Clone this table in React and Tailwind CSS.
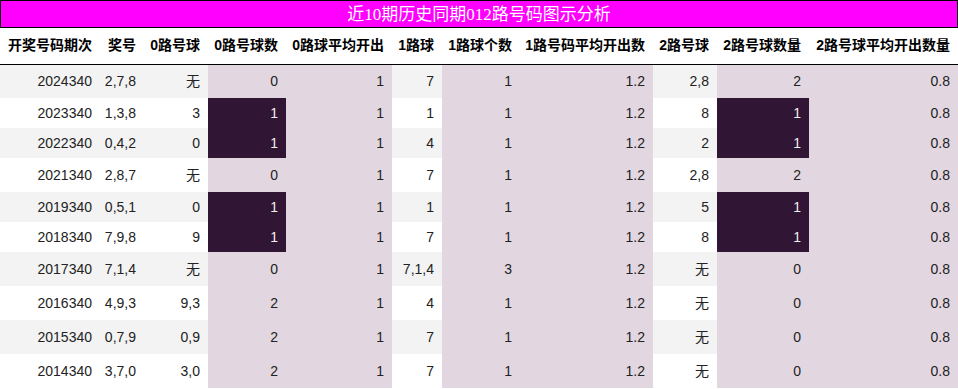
const headers = [
  '开奖号码期次', '奖号', '0路号球', '0路号球数', '0路球平均开出', '1路球',
  '1路球个数', '1路号码平均开出数', '2路号球', '2路号球数量', '2路号球平均开出数量',
];

const widths = ['w-[100px]', 'w-[44px]', 'w-[64px]', 'w-[78px]', 'w-[106px]', 'w-[50px]', 'w-[78px]', 'w-[133px]', 'w-[64px]', 'w-[92px]', 'w-[149px]'];

// columns drawn on the lilac background
const tinted = [3, 4, 6, 7, 9, 10];

const rows = [
  ['2024340', '2,7,8', '无', '0', '1', '7', '1', '1.2', '2,8', '2', '0.8'],
  ['2023340', '1,3,8', '3', '1', '1', '1', '1', '1.2', '8', '1', '0.8'],
  ['2022340', '0,4,2', '0', '1', '1', '4', '1', '1.2', '2', '1', '0.8'],
  ['2021340', '2,8,7', '无', '0', '1', '7', '1', '1.2', '2,8', '2', '0.8'],
  ['2019340', '0,5,1', '0', '1', '1', '1', '1', '1.2', '5', '1', '0.8'],
  ['2018340', '7,9,8', '9', '1', '1', '7', '1', '1.2', '8', '1', '0.8'],
  ['2017340', '7,1,4', '无', '0', '1', '7,1,4', '3', '1.2', '无', '0', '0.8'],
  ['2016340', '4,9,3', '9,3', '2', '1', '4', '1', '1.2', '无', '0', '0.8'],
  ['2015340', '0,7,9', '0,9', '2', '1', '7', '1', '1.2', '无', '0', '0.8'],
  ['2014340', '3,7,0', '3,0', '2', '1', '7', '1', '1.2', '无', '0', '0.8'],
];

const cellBg = (row, ci, ri) => {
  if ((ci === 3 || ci === 9) && row[ci] === '1') return 'bg-[#301535] text-[#f0eef0]';
  if (tinted.includes(ci)) return 'bg-[#e2d7e1]';
  return ri % 2 === 0 ? 'bg-[#f3f3f3]' : 'bg-white';
};

export default function App() {
  return (
    <div className="w-[958px] h-[389px] bg-white text-[#222] font-['Liberation_Sans','Noto_Sans_CJK_SC',sans-serif] text-[14px]">
      <div className="h-[28px] border border-black bg-[#ff00ff] flex items-center justify-center text-white text-[17px] font-['Liberation_Serif','Noto_Sans_CJK_SC',serif] leading-none">
        近10期历史同期012路号码图示分析
      </div>
      <table className="table-fixed border-collapse w-[958px]">
        <colgroup>
          {widths.map((w, i) => (
            <col key={i} className={w} />
          ))}
        </colgroup>
        <thead>
          <tr className="h-[36px] border-b border-black">
            {headers.map((h) => (
              <th key={h} className="text-right font-bold pr-2 pl-0 whitespace-nowrap text-black">
                {h}
              </th>
            ))}
          </tr>
        </thead>
        <tbody>
          {rows.map((row, ri) => (
            <tr key={row[0]} className={row.includes('无') ? 'h-[34px]' : 'h-[30px]'}>
              {row.map((v, ci) => (
                <td key={ci} className={`text-right pr-2 whitespace-nowrap leading-none ${cellBg(row, ci, ri)}`}>
                  {v}
                </td>
              ))}
            </tr>
          ))}
        </tbody>
      </table>
    </div>
  );
}
